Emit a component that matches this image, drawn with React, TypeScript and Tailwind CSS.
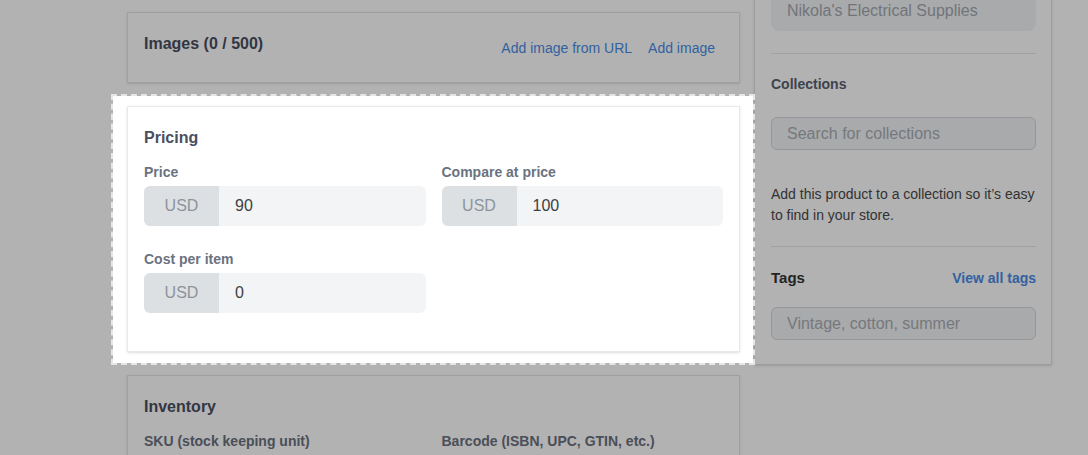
import React from "react";

function MoneyField({ label, value }: { label: string; value: string }) {
  return (
    <div className="flex flex-col">
      <label className="mb-1 text-sm leading-5 font-bold text-[#6b7280]">{label}</label>
      <div className="flex h-10 overflow-hidden rounded-md bg-[#f3f4f6]">
        <span className="flex w-[75px] shrink-0 items-center justify-center bg-[#dde0e3] text-base text-[#8d939b]">
          USD
        </span>
        <input
          readOnly
          value={value}
          className="min-w-0 flex-1 bg-transparent pl-4 text-base text-[#404040] outline-none"
        />
      </div>
    </div>
  );
}

export default function App() {
  return (
    <div className="relative h-[455px] w-[1088px] overflow-hidden bg-white font-['Liberation_Sans',Arial,sans-serif]">
      <div className="flex items-start gap-[14px] pl-[127px]">
        {/* Main column */}
        <div className="flex w-[613px] shrink-0 flex-col gap-[23px] pt-3">
          {/* Images */}
          <section className="flex h-[71px] items-start justify-between border border-[#e3e5e8] bg-white pr-4 pl-4 pt-[19px] shadow-sm">
            <h2 className="text-base leading-6 font-bold text-[#4a4e5f]">Images (0 / 500)</h2>
            <div className="mt-[6px] flex">
              <button className="px-2 text-sm leading-5 text-[#4a8ce6]">Add image from URL</button>
              <button className="px-2 text-sm leading-5 text-[#4a8ce6]">Add image</button>
            </div>
          </section>

          {/* Pricing (highlighted) */}
          <div className="relative z-20">
            <div className="absolute -top-3 -right-[15px] -bottom-[13px] -left-4 -z-10 border-2 border-dashed border-[#e6e6e6] bg-white bg-clip-padding" />
            <section className="border border-[#e8e9ec] bg-white px-4 pt-[19px] pb-[38px] shadow-sm">
              <h2 className="mb-3 text-base leading-6 font-bold text-[#4a4e5f]">Pricing</h2>
              <div className="grid grid-cols-2 gap-x-4 gap-y-[23px]">
                <MoneyField label="Price" value="90" />
                <MoneyField label="Compare at price" value="100" />
                <MoneyField label="Cost per item" value="0" />
              </div>
            </section>
          </div>

          {/* Inventory */}
          <section className="border border-[#e3e5e8] bg-white px-4 pt-[19px] pb-6 shadow-sm">
            <h2 className="mb-3 text-base leading-6 font-bold text-[#4a4e5f]">Inventory</h2>
            <div className="grid grid-cols-2 gap-x-4">
              <div className="text-sm leading-5 font-bold text-[#6b7280]">SKU (stock keeping unit)</div>
              <div className="text-sm leading-5 font-bold text-[#6b7280]">Barcode (ISBN, UPC, GTIN, etc.)</div>
            </div>
            <div className="mt-1 grid grid-cols-2 gap-x-4">
              <div className="h-10 rounded-md bg-[#f3f4f6]" />
              <div className="h-10 rounded-md bg-[#f3f4f6]" />
            </div>
          </section>
        </div>

        {/* Sidebar */}
        <aside className="-mt-[26px] w-[298px] shrink-0 border border-[#dfe2e6] bg-white pt-4 pr-[15px] pb-6 pl-4 shadow-sm">
          <input
            readOnly
            value="Nikola's Electrical Supplies"
            className="h-10 w-full rounded-lg bg-[#f3f4f6] pl-4 text-base text-[#a3a8af] outline-none"
          />
          <div className="mt-[22px] h-px bg-[#e5e7eb]" />
          <h3 className="mt-5 text-sm leading-5 font-bold text-[#596170]">Collections</h3>
          <input
            readOnly
            placeholder="Search for collections"
            className="mt-[23px] h-[33px] w-full rounded-md border border-[#d4d7db] bg-[#f3f4f6] pl-[15px] text-base outline-none placeholder:text-[#a8adb4]"
          />
          <p className="mt-[34px] text-sm leading-[21px] whitespace-nowrap text-[#4a4a4a]">
            Add this product to a collection so it’s easy
            <br />
            to find in your store.
          </p>
          <div className="mt-5 h-px bg-[#e5e7eb]" />
          <div className="mt-[19px] flex items-center justify-between">
            <h3 className="text-[15px] leading-6 font-bold text-[#333]">Tags</h3>
            <button className="text-sm leading-5 font-bold text-[#4a8ce6]">View all tags</button>
          </div>
          <input
            readOnly
            placeholder="Vintage, cotton, summer"
            className="mt-[17px] h-[33px] w-full rounded-md border border-[#d4d7db] bg-[#f3f4f6] pl-[15px] text-base outline-none placeholder:text-[#a8adb4]"
          />
        </aside>
      </div>

      {/* Tour overlay */}
      <div className="fixed inset-0 z-10 bg-black/30" />
    </div>
  );
}
